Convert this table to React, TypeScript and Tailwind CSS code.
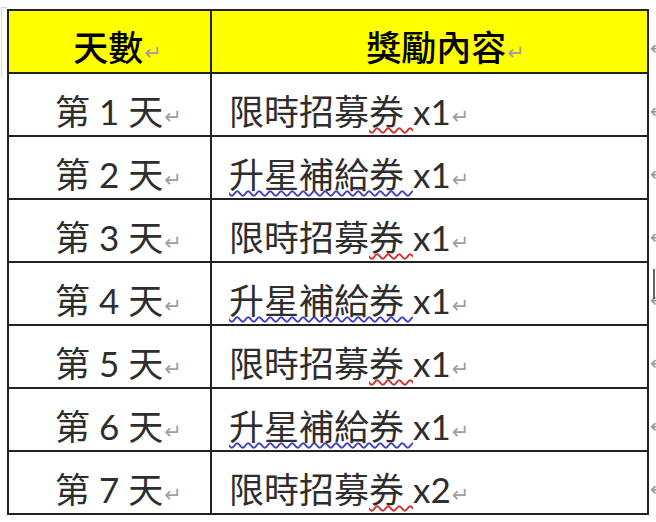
import React from "react";

const rows = [
  { day: "1", qty: "x1", kind: "red" },
  { day: "2", qty: "x1", kind: "blue" },
  { day: "3", qty: "x1", kind: "red" },
  { day: "4", qty: "x1", kind: "blue" },
  { day: "5", qty: "x1", kind: "red" },
  { day: "6", qty: "x1", kind: "blue" },
  { day: "7", qty: "x2", kind: "red" },
];

const Mark = () => (
  <span
    className="text-[21px] text-[#a0a0a0] ml-[1px] align-[1px]"
    style={{ fontFamily: "'DejaVu Sans', sans-serif" }}
  >
    ↵
  </span>
);

const cell = "border-2 border-[#222] align-middle p-0 leading-none";

export default function App() {
  return (
    <div
      className="relative w-[656px] h-[522px] overflow-hidden bg-white flex pt-[9px] pl-[7px]"
      style={{ fontFamily: "Lato, 'Noto Sans CJK TC', sans-serif" }}
    >
      <div className="absolute left-[1px] top-[7px] w-[6px] h-[70px] border-l border-t border-[#d8d8d8]" />
      <table className="border-collapse w-[640px] table-fixed shrink-0 self-start">
        <colgroup>
          <col className="w-[203px]" />
          <col className="w-[437px]" />
        </colgroup>
        <thead>
          <tr className="h-[63px] bg-[#ffff00]">
            <th className={`${cell} text-center pt-[12px] text-[35px] font-medium text-black`}>
              <span className="relative left-[8px]">
                天數
                <Mark />
              </span>
            </th>
            <th className={`${cell} text-center pt-[12px] text-[35px] font-medium text-black`}>
              <span className="relative left-[16px]">
                獎勵內容
                <Mark />
              </span>
            </th>
          </tr>
        </thead>
        <tbody>
          {rows.map((r) => (
            <tr key={r.day} className="h-[63px]">
              <td className={`${cell} text-center pt-[14px] text-[35px] text-[#2e2e2e]`}>
                <span className="relative left-[9px]">
                  第 {r.day} 天
                  <Mark />
                </span>
              </td>
              <td className={`${cell} text-left pt-[14px] pl-[17px] text-[35px] text-[#2e2e2e]`}>
                {r.kind === "red" ? (
                  <>
                    限時招募
                    <span className="underline decoration-wavy decoration-[#d23030] decoration-[1.5px] underline-offset-[2px]">
                      {"券 "}
                    </span>
                  </>
                ) : (
                  <span className="underline decoration-wavy decoration-[#4040c0] decoration-[1.5px] underline-offset-[2px]">
                    {"升星補給券 "}
                  </span>
                )}
                <span>{r.qty}</span>
                <Mark />
              </td>
            </tr>
          ))}
        </tbody>
      </table>
      <div
        className="flex flex-col pl-[1px] text-[20px] text-[#999] leading-none"
        style={{ fontFamily: "'DejaVu Sans', sans-serif" }}
      >
        {[0, 1, 2, 3, 4, 5, 6, 7].map((i) => (
          <div key={i} className="h-[63px] flex items-center pt-[14px] relative">
            ↵
            {i === 4 && (
              <div className="absolute left-[3px] top-[8px] w-[4px] h-[30px] border-l-2 border-[#666]" />
            )}
          </div>
        ))}
      </div>
    </div>
  );
}
